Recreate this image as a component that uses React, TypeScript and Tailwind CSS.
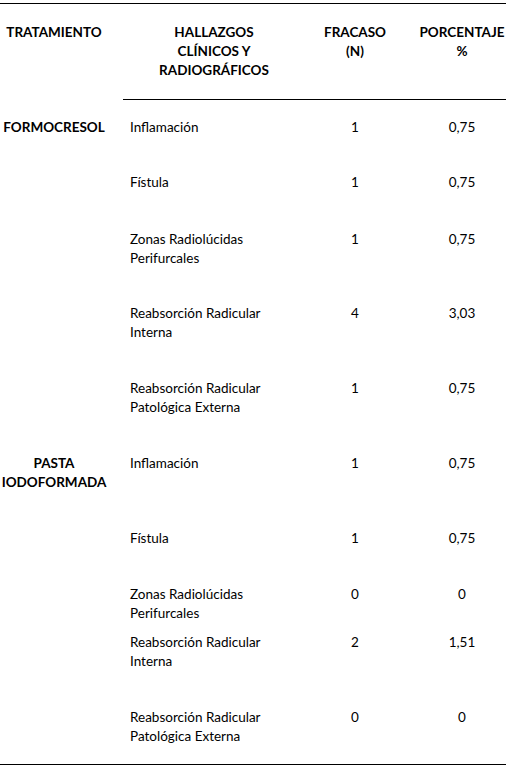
import React from 'react';

type Row = {
    treatment?: string[];
    finding: string[];
    n: string;
    pct: string;
    h: string;
};

const rows: Row[] = [
    { treatment: ['FORMOCRESOL'], finding: ['Inflamación'], n: '1', pct: '0,75', h: 'h-[55px]' },
    { finding: ['Fístula'], n: '1', pct: '0,75', h: 'h-[57px]' },
    { finding: ['Zonas Radiolúcidas', 'Perifurcales'], n: '1', pct: '0,75', h: 'h-[74px]' },
    { finding: ['Reabsorción Radicular', 'Interna'], n: '4', pct: '3,03', h: 'h-[75px]' },
    { finding: ['Reabsorción Radicular', 'Patológica Externa'], n: '1', pct: '0,75', h: 'h-[75px]' },
    { treatment: ['PASTA', 'IODOFORMADA'], finding: ['Inflamación'], n: '1', pct: '0,75', h: 'h-[75px]' },
    { finding: ['Fístula'], n: '1', pct: '0,75', h: 'h-[56px]' },
    { finding: ['Zonas Radiolúcidas', 'Perifurcales'], n: '0', pct: '0', h: 'h-[48px]' },
    { finding: ['Reabsorción Radicular', 'Interna'], n: '2', pct: '1,51', h: 'h-[75px]' },
    { finding: ['Reabsorción Radicular', 'Patológica Externa'], n: '0', pct: '0', h: 'h-[56px]' },
];

const Lines = ({ items }: { items: string[] }) => (
    <>
        {items.map((t) => (
            <div key={t}>{t}</div>
        ))}
    </>
);

export default function App() {
    return (
        <div
            className="w-[506px] bg-white text-black pt-[3px] text-[13.5px] leading-[19px]"
            style={{ fontFamily: 'Lato, "Open Sans", sans-serif' }}
        >
            <div className="border-t border-black">
                {/* header */}
                <div className="flex font-bold pt-[19px] h-[95px] text-center">
                    <div className="w-[108px]">TRATAMIENTO</div>
                    <div className="w-[197px] pl-[15px]">
                        <Lines items={['HALLAZGOS', 'CLÍNICOS Y', 'RADIOGRÁFICOS']} />
                    </div>
                    <div className="w-[100px]">
                        <Lines items={['FRACASO', '(N)']} />
                    </div>
                    <div className="w-[101px] pl-[13px]">
                        <Lines items={['PORCENTAJE', '%']} />
                    </div>
                </div>
                <div className="ml-[123px] border-t border-black" />

                {/* body */}
                <div className="pt-[18px]">
                    {rows.map((r, i) => (
                        <div key={i} className={`flex ${r.h}`}>
                            <div className="w-[108px] text-center font-bold">
                                {r.treatment && <Lines items={r.treatment} />}
                            </div>
                            <div className="w-[197px] pl-[22px]">
                                <Lines items={r.finding} />
                            </div>
                            <div className="w-[100px] text-center">{r.n}</div>
                            <div className="w-[101px] pl-[13px] text-center">{r.pct}</div>
                        </div>
                    ))}
                </div>
                <div className="border-t border-black" />
            </div>
        </div>
    );
}
